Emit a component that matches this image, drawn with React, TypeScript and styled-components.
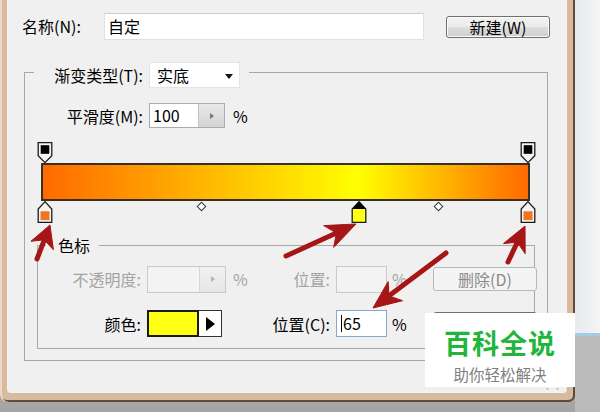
import React from "react";
import styled, { createGlobalStyle } from "styled-components";

const GlobalStyle = createGlobalStyle`
  html, body { margin: 0; padding: 0; }
  body {
    background: #a9a9a9;
    font-family: "Noto Sans CJK SC", "Noto Sans", sans-serif;
  }
  * { box-sizing: border-box; }
`;

const FONT = `"Noto Sans CJK SC", "Noto Sans", sans-serif`;

const Screen = styled.div`
  position: relative;
  width: 600px;
  height: 412px;
  overflow: hidden;
  display: flex;
  background: linear-gradient(#b3b3b3, #a5a5a5);
  font-family: ${FONT};
  font-size: 16px;
  color: #000;
`;

const WindowFrame = styled.div`
  flex: none;
  width: 575px;
  height: 402px;
  padding: 0 9px 10px 8px;
  background: #d8ba9f;
  border-radius: 0 0 7px 7px;
  box-shadow: inset 2px 0 0 #ead7c8, inset -2px 0 0 #5e4b3b,
    inset 0 -2px 0 #5e4b3b;
`;

const Dialog = styled.div`
  height: 100%;
  background: #f0f0f0;
  padding: 13px 0 0 14px;
  box-shadow: 0 0 0 1px #f8f4f0;
  border-radius: 0 0 3px 3px;
`;

const SideStrip = styled.div`
  flex: 1;
  display: flex;
  flex-direction: column;
`;

const SideTop = styled.div`
  height: 336px;
  background: linear-gradient(90deg, #e7eaee, #f3f5f7);
  border-bottom: 3px solid #a6c9e6;
`;

const SideBottom = styled.div`
  flex: 1;
  background: #bababa;
`;

const NameRow = styled.div`
  display: flex;
  align-items: center;
  height: 27px;
`;

const NameLabel = styled.label`
  width: 82px;
  line-height: 27px;
`;

const NameInput = styled.div`
  width: 320px;
  height: 27px;
  background: #fff;
  border: 1px solid #e0e0e0;
  border-top-color: #cdcdcd;
  padding-left: 3px;
  line-height: 25px;
`;

const Button = styled.button<{ $h: number; $ml?: number }>`
  width: 104px;
  height: ${(p) => p.$h}px;
  margin-left: ${(p) => p.$ml ?? 0}px;
  padding: 0;
  font-family: ${FONT};
  font-size: 16px;
  line-height: 18px;
  color: #000;
  border: 1px solid #707070;
  border-radius: 3px;
  background: linear-gradient(#f2f2f2 0%, #ebebeb 50%, #dddddd 51%, #cfcfcf 100%);
  box-shadow: inset 0 0 0 1px #fbfbfb;

  &:disabled {
    color: #8a8a8a;
    border-color: #b5b9bc;
    background: #f4f4f4;
    box-shadow: none;
  }
`;

const Group = styled.fieldset<{ $mt: number; $ml: number; $w: number; $h: number }>`
  margin: ${(p) => p.$mt}px 0 0 ${(p) => p.$ml}px;
  padding: 0;
  width: ${(p) => p.$w}px;
  height: ${(p) => p.$h}px;
  min-inline-size: 0;
  border: 1px solid #a8a8a8;
`;

const GroupLegend = styled.legend<{ $ml: number; $pl: number; $pr: number }>`
  margin-left: ${(p) => p.$ml}px;
  padding: 0 ${(p) => p.$pr}px 0 ${(p) => p.$pl}px;
`;

const LegendInner = styled.div<{ $h: number }>`
  display: flex;
  align-items: flex-start;
  height: ${(p) => p.$h}px;
  line-height: ${(p) => p.$h}px;
`;

const TypeLabel = styled.span`
  width: 90px;
  line-height: 26px;
  text-align: right;
`;

const Select = styled.div`
  position: relative;
  margin-left: 6px;
  width: 91px;
  height: 26px;
  flex: none;
  background: #fff;
  border: 1px solid #e4e4e4;
  padding-left: 7px;
  line-height: 24px;
`;

const SelectCaret = styled.span`
  position: absolute;
  right: 6px;
  top: 11px;
  border-top: 5px solid #111;
  border-left: 4.5px solid transparent;
  border-right: 4.5px solid transparent;
`;

const SmoothRow = styled.div`
  display: flex;
  align-items: center;
  margin-top: 21px;
  height: 25px;
`;

const FieldLabel = styled.span<{ $muted?: boolean }>`
  text-align: right;
  padding-right: 6px;
  white-space: nowrap;
  color: ${(p) => (p.$muted ? "#a3a3a3" : "#000")};
`;

const SmoothLabel = styled(FieldLabel)`
  width: 124px;
`;

const Percent = styled.span<{ $muted?: boolean; $indent: number }>`
  padding-left: ${(p) => p.$indent}px;
  color: ${(p) => (p.$muted ? "#a3a3a3" : "#000")};
`;

const SpinBox = styled.div<{ $w: number; $h: number; $disabled?: boolean }>`
  display: flex;
  width: ${(p) => p.$w}px;
  height: ${(p) => p.$h}px;
  border: 1px solid ${(p) => (p.$disabled ? "#cacaca" : "#acacac")};
  background: ${(p) => (p.$disabled ? "#f3f3f3" : "#fff")};
`;

const SpinValue = styled.div`
  flex: 1;
  padding-left: 3px;
  line-height: 23px;
`;

const SpinButton = styled.div<{ $disabled?: boolean }>`
  width: 26px;
  display: flex;
  align-items: center;
  justify-content: center;
  border-left: 1px solid ${(p) => (p.$disabled ? "#d6d6d6" : "#c2c2c2")};
  background: ${(p) =>
    p.$disabled
      ? "linear-gradient(#f1f1f1, #e6e6e6)"
      : "linear-gradient(#e9e9e9, #d4d4d4)"};

  &::after {
    content: "";
    border-left: 4px solid ${(p) => (p.$disabled ? "#b5b5b5" : "#777")};
    border-top: 3px solid transparent;
    border-bottom: 3px solid transparent;
  }
`;

const Editor = styled.div`
  margin: 14px 0 0 16px;
  width: 489px;
`;

const StopRow = styled.div<{ $h: number }>`
  position: relative;
  height: ${(p) => p.$h}px;
  margin: 0 2px 0 4px;
`;

const Pin = styled.svg<{ $pos: number }>`
  position: absolute;
  top: 0;
  left: ${(p) => p.$pos}%;
  transform: translateX(-50%);
  overflow: visible;
`;

const Diamond = styled.div<{ $pos: number }>`
  position: absolute;
  top: 2px;
  left: ${(p) => p.$pos}%;
  width: 7px;
  height: 7px;
  margin-left: -3.5px;
  background: #fff;
  border: 1px solid #333;
  transform: rotate(45deg);
`;

const GradientBar = styled.div`
  height: 38px;
  border: 2px solid #3a2f25;
  background: linear-gradient(90deg, #ff6a00 0%, #ffff00 65%, #ff6a00 100%);
`;

const StopGrid = styled.div`
  display: grid;
  grid-template-columns: 109px 79px 40px 70px 51px 46px 104px;
  grid-template-rows: 28px 27px;
  row-gap: 17px;
  align-items: center;
  margin-top: 9px;
`;

const TextBox = styled.div<{ $active?: boolean; $disabled?: boolean }>`
  width: 51px;
  height: 27px;
  border: 1px solid
    ${(p) => (p.$active ? "#86a8cf" : p.$disabled ? "#cacaca" : "#acacac")};
  background: ${(p) => (p.$disabled ? "#f3f3f3" : "#fff")};
  padding-left: 4px;
  line-height: 25px;
  display: flex;
  align-items: center;
`;

const Caret = styled.span`
  display: inline-block;
  width: 1px;
  height: 17px;
  background: #000;
  margin-right: 1px;
`;

const ColorPicker = styled.div`
  display: flex;
  width: 75px;
  height: 27px;
`;

const ColorChip = styled.div<{ $color: string }>`
  flex: 1;
  background: ${(p) => p.$color};
  border: 2px solid #1a1a1a;
`;

const ColorMenu = styled.div`
  width: 23px;
  display: flex;
  align-items: center;
  justify-content: center;
  background: #fff;
  border: 1px solid #333;
  border-left: 0;

  &::after {
    content: "";
    margin-left: 1px;
    border-left: 9px solid #000;
    border-top: 7px solid transparent;
    border-bottom: 7px solid transparent;
  }
`;

const Watermark = styled.div`
  position: absolute;
  left: 425px;
  top: 313px;
  width: 150px;
  height: 74px;
  background: #fff;
  display: flex;
  flex-direction: column;
  align-items: center;
  padding-top: 10px;
`;

const BrandName = styled.div`
  font-size: 27px;
  font-weight: 700;
  line-height: 40px;
  color: #22b53b;
  letter-spacing: 1px;
`;

const BrandSlogan = styled.div`
  font-size: 15.5px;
  line-height: 23px;
  color: #808080;
`;

const Dots = styled.span`
  position: absolute;
  right: 2px;
  bottom: -6px;
  font-size: 9px;
  line-height: 9px;
  color: #b8b8b8;
  letter-spacing: 1px;
`;

const ArrowLayer = styled.svg`
  position: absolute;
  left: 0;
  top: 0;
  pointer-events: none;
`;

type Pt = [number, number];
interface ArrowSpec {
  tail: Pt;
  tip: Pt;
  head: number;
  half: number;
}

const ARROWS: ArrowSpec[] = [
  { tail: [37, 259], tip: [50, 225], head: 22, half: 12 },
  { tail: [286, 256], tip: [356, 224], head: 30, half: 12 },
  { tail: [446, 253], tip: [373, 308], head: 28, half: 12 },
  { tail: [508, 262], tip: [525, 226], head: 25, half: 12 },
];

function arrowGeometry(a: ArrowSpec) {
  const dx = a.tip[0] - a.tail[0];
  const dy = a.tip[1] - a.tail[1];
  const len = Math.hypot(dx, dy);
  const ux = dx / len;
  const uy = dy / len;
  const px = -uy;
  const py = ux;
  const bx = a.tip[0] - a.head * ux;
  const by = a.tip[1] - a.head * uy;
  const nx = a.tip[0] - a.head * 0.72 * ux;
  const ny = a.tip[1] - a.head * 0.72 * uy;
  const poly = [
    [a.tip[0], a.tip[1]],
    [bx + a.half * px, by + a.half * py],
    [nx, ny],
    [bx - a.half * px, by - a.half * py],
  ]
    .map((p) => p.map((v) => v.toFixed(1)).join(","))
    .join(" ");
  return { nx, ny, poly };
}

const ORANGE = "#f27420";
const YELLOW = "#ffff14";

function TopStop({ pos }: { pos: number }) {
  return (
    <Pin $pos={pos} width="15" height="21" viewBox="0 0 15 21">
      <path d="M0.7 0.7 H14.3 V13.8 L7.5 20.6 L0.7 13.8 Z" fill="#f4f4f4" stroke="#1b1b1b" strokeWidth="1.3" />
      <rect x="3.2" y="3.2" width="8.6" height="8.6" fill="#000" />
    </Pin>
  );
}

function BottomStop({ pos, color, selected }: { pos: number; color: string; selected?: boolean }) {
  return (
    <Pin $pos={pos} width="15" height="22" viewBox="0 0 15 22">
      <path
        d="M7.5 0.6 L14.3 8 V21.3 H0.7 V8 Z"
        fill={selected ? color : "#f4f4f4"}
        stroke="#1b1b1b"
        strokeWidth="1.3"
      />
      {selected ? (
        <path d="M7.5 0.6 L14.3 8 H0.7 Z" fill="#000" />
      ) : (
        <rect x="3" y="10.3" width="9" height="8.8" fill={color} />
      )}
    </Pin>
  );
}

export default function App() {
  return (
    <>
      <GlobalStyle />
      <Screen>
        <WindowFrame>
          <Dialog>
            <NameRow>
              <NameLabel>名称(N):</NameLabel>
              <NameInput>自定</NameInput>
              <Button $h={22} $ml={22}>新建(W)</Button>
            </NameRow>

            <Group $mt={22} $ml={2} $w={524} $h={299}>
              <GroupLegend $ml={9} $pl={19} $pr={9}>
                <LegendInner $h={20}>
                  <TypeLabel>渐变类型(T):</TypeLabel>
                  <Select>
                    实底
                    <SelectCaret />
                  </Select>
                </LegendInner>
              </GroupLegend>

              <SmoothRow>
                <SmoothLabel>平滑度(M):</SmoothLabel>
                <SpinBox $w={76} $h={25}>
                  <SpinValue>100</SpinValue>
                  <SpinButton />
                </SpinBox>
                <Percent $indent={8}>%</Percent>
              </SmoothRow>

              <Editor>
                <StopRow $h={21}>
                  <TopStop pos={0} />
                  <TopStop pos={100} />
                </StopRow>
                <GradientBar />
                <StopRow $h={22}>
                  <BottomStop pos={0} color={ORANGE} />
                  <Diamond $pos={32.5} />
                  <BottomStop pos={65} color={YELLOW} selected />
                  <Diamond $pos={81.5} />
                  <BottomStop pos={100} color={ORANGE} />
                </StopRow>
              </Editor>

              <Group $mt={11} $ml={12} $w={498} $h={115}>
                <GroupLegend $ml={8} $pl={12} $pr={9}>
                  <LegendInner $h={22}>色标</LegendInner>
                </GroupLegend>
                <StopGrid>
                  <FieldLabel $muted>不透明度:</FieldLabel>
                  <SpinBox $w={79} $h={27} $disabled>
                    <SpinValue />
                    <SpinButton $disabled />
                  </SpinBox>
                  <Percent $muted $indent={7}>%</Percent>
                  <FieldLabel $muted>位置:</FieldLabel>
                  <TextBox $disabled />
                  <Percent $muted $indent={5}>%</Percent>
                  <Button $h={24} disabled>删除(D)</Button>

                  <FieldLabel>颜色:</FieldLabel>
                  <ColorPicker>
                    <ColorChip $color={YELLOW} />
                    <ColorMenu />
                  </ColorPicker>
                  <span />
                  <FieldLabel>位置(C):</FieldLabel>
                  <TextBox $active>
                    <Caret />
                    65
                  </TextBox>
                  <Percent $indent={5}>%</Percent>
                  <Button $h={24} aria-label="删除(D)" />
                </StopGrid>
              </Group>
            </Group>
          </Dialog>
        </WindowFrame>
        <SideStrip>
          <SideTop />
          <SideBottom />
        </SideStrip>

        <ArrowLayer width="600" height="412" viewBox="0 0 600 412">
          {ARROWS.map((a, i) => {
            const g = arrowGeometry(a);
            return (
              <g key={i} fill="#a71616" stroke="#a71616">
                <line
                  x1={a.tail[0]}
                  y1={a.tail[1]}
                  x2={g.nx}
                  y2={g.ny}
                  strokeWidth="5"
                  strokeLinecap="round"
                />
                <polygon points={g.poly} strokeWidth="1" strokeLinejoin="round" />
              </g>
            );
          })}
        </ArrowLayer>

        <Watermark>
          <BrandName>百科全说</BrandName>
          <BrandSlogan>助你轻松解决</BrandSlogan>
          <Dots>···</Dots>
        </Watermark>
      </Screen>
    </>
  );
}
